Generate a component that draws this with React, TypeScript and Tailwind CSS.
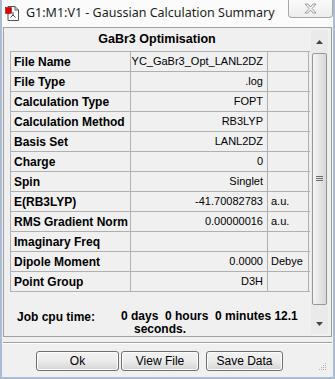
import React from 'react';

const rows: [string, string, string][] = [
  ['File Name', 'YC_GaBr3_Opt_LANL2DZ', ''],
  ['File Type', '.log', ''],
  ['Calculation Type', 'FOPT', ''],
  ['Calculation Method', 'RB3LYP', ''],
  ['Basis Set', 'LANL2DZ', ''],
  ['Charge', '0', ''],
  ['Spin', 'Singlet', ''],
  ['E(RB3LYP)', '-41.70082783', 'a.u.'],
  ['RMS Gradient Norm', '0.00000016', 'a.u.'],
  ['Imaginary Freq', '', ''],
  ['Dipole Moment', '0.0000', 'Debye'],
  ['Point Group', 'D3H', '']
];

const AppIcon = () => (
  <svg width="16" height="16" viewBox="0 0 16 16">
    <path d="M3 1.5h7l3.5 3.5v10.5H3z" fill="#fff" stroke="#555" strokeWidth="1" />
    <path d="M10 1.5V5h3.5" fill="none" stroke="#555" strokeWidth="1" />
    <line x1="8" y1="7" x2="8" y2="10" stroke="#444" />
    <line x1="8" y1="10" x2="5.5" y2="12.5" stroke="#444" />
    <line x1="8" y1="10" x2="10.5" y2="12.5" stroke="#444" />
    <rect x="0.5" y="2.5" width="6" height="6" fill="#e00000" stroke="#800" strokeWidth="0.5" />
  </svg>
);

const Button = ({ label, width, className = '' }: { label: string; width: string; className?: string }) => (
  <button
    type="button"
    className={`h-[20px] ${width} ${className} rounded-[3px] border border-[#707070] bg-gradient-to-b from-[#f2f2f2] via-[#ebebeb] to-[#d5d5d5] text-[12px] text-black leading-none shadow-[inset_0_0_0_1px_#fcfcfc]`}>
    {label}
  </button>
);

const App = () => {
  return (
    <div className="w-[335px] h-[379px] bg-[#f0f0f0] font-['Liberation_Sans',sans-serif] text-black flex flex-col border-x-[2px] border-b-[2px] border-[#a9bcd3] overflow-hidden">
      <div className="h-[27px] shrink-0 bg-[#fbfbfb] flex items-start relative">
        <div className="mt-[5px] ml-[3px]">
          <AppIcon />
        </div>
        <span className="ml-[5px] mt-[7px] text-[12.5px] text-[#1e1e1e] font-['Noto_Sans',sans-serif] leading-none">
          G1:M1:V1 - Gaussian Calculation Summary
        </span>
        <div className="absolute right-0 top-0 w-[45px] h-[18px] border border-t-0 border-[#a8a8a8] rounded-b-[4px] bg-gradient-to-b from-[#fafafa] to-[#eeeeee] flex items-center justify-center">
          <svg width="13" height="11" viewBox="0 0 13 11">
            <path d="M1 1h3l2.5 3 2.5-3h3L8 5.5 12 10H9L6.5 7 4 10H1l4-4.5z" fill="#f4f4f4" stroke="#8a8a8a" strokeWidth="0.8" />
          </svg>
        </div>
      </div>

      <div className="mx-[1px] h-[310px] border border-[#a0a0a0] flex">
        <div className="w-[306px] flex flex-col">
          <div className="h-[25px] flex items-center justify-center font-bold text-[12.5px]">GaBr3 Optimisation</div>
          <div className="flex">
            <div className="w-[6px]" />
            <div className="flex-1 border-l border-t border-[#b0b0b0]">
              {rows.map(([label, value, unit]) => (
                <div key={label} className="h-[20px] flex border-b border-[#b0b0b0]">
                  <div className="w-[120px] border-r border-[#b0b0b0] flex items-center pl-[3px] font-bold text-[12px]">{label}</div>
                  <div className="w-[137px] border-r border-[#b0b0b0] flex items-center justify-end pr-[4px] text-[11px]">{value}</div>
                  <div className="w-[41px] border-r border-[#b0b0b0] flex items-center pl-[3px] text-[11px]">{unit}</div>
                </div>
              ))}
            </div>
          </div>
          <div className="flex text-[12px] font-bold mt-[18px] leading-[13px]">
            <div className="ml-[13px] w-[104px] pt-[1px]">Job cpu time:</div>
            <div className="w-[180px] text-left">
              <div className="whitespace-pre">0 days  0 hours  0 minutes 12.1</div>
              <div className="pl-[13px]">seconds.</div>
            </div>
          </div>
        </div>
        <div className="w-[17px] ml-[1px] mt-[2px] mb-[2px] flex flex-col bg-[#eaeaea]">
          <div className="h-[23px] flex items-center justify-center">
            <svg width="7" height="4" viewBox="0 0 7 4"><path d="M0 4L3.5 0L7 4z" fill="#444" /></svg>
          </div>
          <div className="h-[252px] mx-[1px] rounded-[2px] border border-[#979797] bg-gradient-to-r from-[#f4f4f4] via-[#e6e6e6] to-[#d8d8d8] flex items-center justify-center">
            <svg width="7" height="6" viewBox="0 0 7 6">
              <path d="M0 0.5h7M0 2.5h7M0 4.5h7" stroke="#6a6a6a" strokeWidth="1" />
            </svg>
          </div>
          <div className="flex-1" />
          <div className="h-[20px] flex items-center justify-center">
            <svg width="7" height="4" viewBox="0 0 7 4"><path d="M0 0L3.5 4L7 0z" fill="#444" /></svg>
          </div>
        </div>
      </div>

      <div className="mt-[5px] mx-[1px] border-t border-[#a0a0a0] border-b border-b-white" />

      <div className="flex items-start pl-[34px] mt-[7px] relative flex-1">
        <Button label="Ok" width="w-[83px]" />
        <Button label="View File" width="w-[78px]" className="ml-[2px]" />
        <Button label="Save Data" width="w-[77px]" className="ml-[7px]" />
        <svg className="absolute right-[6px] bottom-[6px]" width="9" height="9" viewBox="0 0 9 9">
          <g fill="#b0b0b0">
            <rect x="7" y="1" width="1" height="1" />
            <rect x="5" y="3" width="1" height="1" />
            <rect x="7" y="3" width="1" height="1" />
            <rect x="3" y="5" width="1" height="1" />
            <rect x="5" y="5" width="1" height="1" />
            <rect x="7" y="5" width="1" height="1" />
            <rect x="1" y="7" width="1" height="1" />
            <rect x="3" y="7" width="1" height="1" />
            <rect x="5" y="7" width="1" height="1" />
            <rect x="7" y="7" width="1" height="1" />
          </g>
        </svg>
      </div>
    </div>
  );
};

export default App;
